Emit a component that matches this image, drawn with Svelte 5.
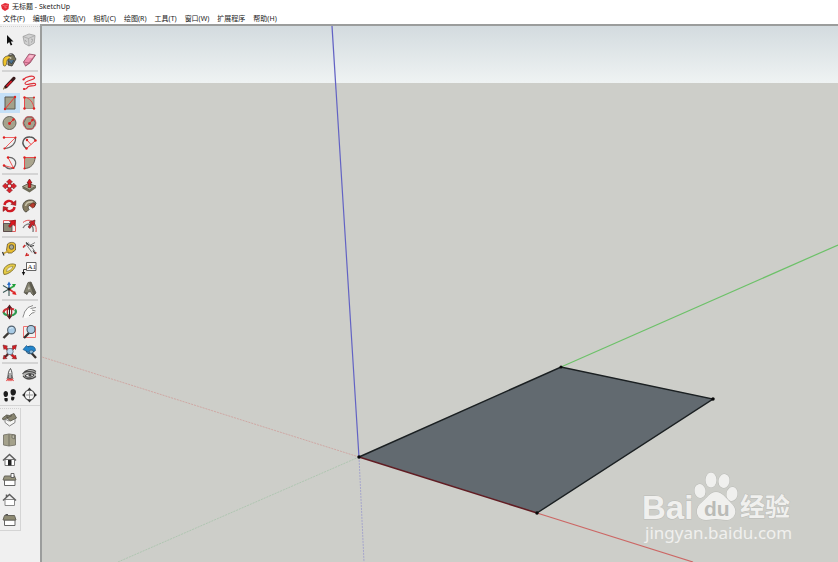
<script lang="ts">
	type Tool = { id: string; label: string; art: string };

	const menus = ['文件(F)', '编辑(E)', '视图(V)', '相机(C)', '绘图(R)', '工具(T)', '窗口(W)', '扩展程序', '帮助(H)'];

	// all tool art is drawn on a 20 x 20 grid
	const groups: Tool[][] = [
		[
			{ id: 'select', label: '选择', art: '<path d="M7 5v9l2.200-2 1.500 3.500 1.600-.8-1.500-3.200h2.700z" fill="#111"/>' },
			{ id: 'component', label: '制作组件', art: '<path d="M3 6.500 9 4l6 1.500-.8 7.500-5.200 3-4.500-2.500z" fill="#d0d0d0" stroke="#a5a5a5" stroke-width=".9"/><path d="m3 6.500 5.500 2 6.500-3M8.500 8.500 9 16" stroke="#a0a0a0" stroke-width=".7"/><path d="m5 10 1.500 2M11 9.500c2-1.500 2.500 1.500 0 3" stroke="#9a9a9a" stroke-width=".8"/>' },
			{ id: 'paint', label: '材质', art: '<path d="m8 6 5-1.500 3 4.500-4 7-4-1z" fill="#747158" stroke="#333" stroke-width=".8"/><path d="M3.500 15.500C2 9 4 5.500 9.500 6l1.500 2c-3 .5-4.500 2-4.500 6-.5 2-2 2.500-3 1.500z" fill="#f0c42c" stroke="#554a22" stroke-width=".7"/><path d="m8 10.500 3.500 3.500 2.500-4" fill="#4d7495" stroke="#26333e" stroke-width=".7"/><path d="M8 5.500c2-3 6-2 6.500 1" stroke="#444" stroke-width=".9"/><circle cx="10.500" cy="8" r="1" fill="#c9c6ae"/>' },
			{ id: 'eraser', label: '擦除', art: '<path d="m3.500 12 5.500-8 6.500 1-5.500 8-4.500 3z" fill="#ee8fae" stroke="#8c4a60" stroke-width=".8"/><path d="m3.500 12 5.500 1 6-8M9 13l-3.500 3" stroke="#a84e67" stroke-width=".7"/><path d="m10 5 4 .5-2 2.500-4-.5z" fill="#f8bccd"/>' }
		],
		[
			{ id: 'line', label: '直线', art: '<path d="M3 16.500 4.500 13l8.500-9c1.500-1 3 .5 2.500 2L7 15z" fill="#38191a"/><path d="m6 12.800 5-5.300 1.300 1.200-5.300 5.300z" fill="#d51b27"/><path d="m3 16.500 1-2.500 1.500 1.500z" fill="#b49e6c"/>' },
			{ id: 'freehand', label: '手绘线', art: '<path d="M3.500 6.500C6 3.500 13.500 2 14.500 4.500S4.500 7.500 5 10.500s9.500-2 10.500.5-5 1.500-7 2.500-1 3-4.500 2.500" stroke="#dd3038" stroke-width="1.200"/><circle cx="3.500" cy="6.500" r="1.100" fill="#d91e28"/><circle cx="4" cy="16" r="1.100" fill="#d91e28"/>' },
			{ id: 'rectangle', label: '矩形', art: '<path d="M5 4h10v12H5z" fill="#a3a18c" stroke="#5c5b52"/><path d="M5 16 15 4" stroke="#e63b3b"/><circle cx="5" cy="16" r="1.200" fill="#e12121"/><circle cx="15" cy="4" r="1.200" fill="#e12121"/>' },
			{ id: 'rotated', label: '旋转矩形', art: '<path d="M4.500 4.500h9.500v11H4.500z" fill="#b3b09b" stroke="#8c867b" stroke-width=".8"/><path d="M4.500 15.500v-11c5 0 9 5 9.500 11" stroke="#e84a4a"/><g fill="#e12121"><circle cx="4.500" cy="4.500" r="1.200"/><circle cx="4.500" cy="15.500" r="1.200"/><circle cx="14" cy="4.500" r="1"/><circle cx="14" cy="15.500" r="1.200"/></g>' },
			{ id: 'circle', label: '圆', art: '<circle cx="9.500" cy="10" r="6.500" fill="#a5a28c" stroke="#66645a"/><path d="m9.500 10.500 4-4" stroke="#df2929"/><circle cx="9.500" cy="10.500" r="1.400" fill="#df2020"/><circle cx="13.500" cy="6.500" r="1.200" fill="#df2020"/>' },
			{ id: 'polygon', label: '多边形', art: '<path d="m6.500 4 6 0 3 6-3 6h-6l-3-6z" fill="#a5a28c" stroke="#555"/><circle cx="9.500" cy="10" r="6.400" stroke="#cf4a4a" stroke-width=".9"/><path d="m9.500 10.500 3-3.500" stroke="#df2929"/><g fill="#df2020"><circle cx="9.500" cy="10.500" r="1.500"/><circle cx="12.500" cy="7" r="1.300"/></g>' },
			{ id: 'arc', label: '圆弧', art: '<path d="M15.500 4.500c.5 6-4 10.500-11 11" stroke="#666" stroke-width="1.200"/><path d="M4 4.500h11.500l-11 11" stroke="#ee5151" stroke-width=".9"/><g fill="#df2020"><circle cx="4" cy="4.500" r="1.200"/><circle cx="15.500" cy="4.500" r="1"/><circle cx="4.500" cy="15.500" r="1.100"/></g>' },
			{ id: 'arc2', label: '两点圆弧', art: '<path d="M6.500 15.500C-.5 10 4 3.500 10 4c3 0 4.500 1.500 5.500 3.500" stroke="#555" stroke-width="1.400"/><path d="m6.500 15.500 9-8M7 7l4 4.500" stroke="#ee4444"/><g fill="#df2020"><circle cx="6.500" cy="15.500" r="1.200"/><circle cx="15.500" cy="7.500" r="1.200"/><circle cx="7" cy="7" r="1.200"/></g>' },
			{ id: 'arc3', label: '三点圆弧', art: '<path d="M8 4.500c5-1 8.500 3 7.500 7-1.500 5-7 6-11.500 1" stroke="#666" stroke-width="1.200"/><path d="m4 12.500 9.500 2.500L8 4.500" stroke="#ed4545" stroke-width=".9"/><g fill="#df2020"><circle cx="4" cy="12.500" r="1.200"/><circle cx="8" cy="4.500" r="1.200"/><circle cx="13.500" cy="15" r="1.100"/></g>' },
			{ id: 'pie', label: '扇形', art: '<path d="M4.500 4.500H15c0 6-4 11-10.500 11z" fill="#aaa58e" stroke="#656056"/><path d="M4.500 15.500v-11H15" stroke="#e54a4a"/><g fill="#df2020"><circle cx="4.500" cy="4.500" r="1.200"/><circle cx="15" cy="4.500" r="1.100"/><circle cx="4.500" cy="15.500" r="1.100"/></g>' }
		],
		[
			{ id: 'move', label: '移动', art: '<path d="m9.500 3 3 3-1.500.5v2H8v-2L6.500 6zm0 14-3-3 1.500-.5v-2h3v2l1.500.5zM2.500 10l3-3 .5 1.500h2v3H6L5.500 13zm14 0-3 3-.5-1.500h-2v-3h2l.5-1.500z" fill="#d9222b" stroke="#7a1b1e" stroke-width=".5"/><circle cx="9.500" cy="10" r="1.300" fill="#f0f0f0"/>' },
			{ id: 'pushpull', label: '推/拉', art: '<path d="m2.500 10.500 6-3 7.500 2.500-6.500 4z" fill="#aaa68d" stroke="#4d4a3b" stroke-width=".8"/><path d="M2.500 10.500v2l7 4L16 12v-2l-6.500 4z" fill="#6e6b58"/><path d="m9.500 3 2.500 4h-1.200v4.500H8.200V7H7z" fill="#d91b20" stroke="#5b1010" stroke-width=".6"/>' },
			{ id: 'rotate', label: '旋转', art: '<path d="M4.500 9C5 4.500 11 3.500 13 7m1.500 4c-.5 4.500-6.500 5.500-8.500 2" stroke="#cf1b24" stroke-width="2.400"/><path d="m16 4.500-.2 5-5-1.200zM3 15.500l.2-5 5 1.200z" fill="#cf1b24" stroke="#741515" stroke-width=".5"/>' },
			{ id: 'follow', label: '路径跟随', art: '<path d="M5.500 16C1 12 2 5 9 4c4-.5 6.500 1 7 3.500l-1.500 3-4-1c-2.500 0-3 1.500-1.500 4L7 15.500z" fill="#857b60" stroke="#4a463a" stroke-width=".9"/><path d="M5.500 10C6 7 9 5.500 13 6" stroke="#c9c3aa" stroke-width="1.500"/><path d="m9.500 9.500 3-2.500 2.500.5-.5 3.500-2 1z" fill="#b93a2b" stroke="#5b241c" stroke-width=".6"/>' },
			{ id: 'scale', label: '缩放', art: '<path d="M3.500 4.500h12v11h-12z" fill="#f8eeee" stroke="#e25c5c"/><path d="M3.500 7.500h8.500v8H3.500z" fill="#8c8975" stroke="#444" stroke-width=".8"/><path d="m8.500 10 2.500-3-1.500-1.500 6-1.500-.8 6-1.700-1.500-3 3z" fill="#dc171f" stroke="#661010" stroke-width=".5"/>' },
			{ id: 'offset', label: '偏移', art: '<path d="M3 6.500C7 3 12 4 14 7c2 2.500 2.500 5.500 2 9" stroke="#e44a4a"/><path d="M3 12c2-4 6-5 8-3 2 1.500 2.500 4 2 7" stroke="#777" stroke-width="1.300"/><path d="m8 11 2.500-3.500L9 6l6-2-.8 6-1.700-1.200-2.500 3.700z" fill="#c8232a" stroke="#4c1717" stroke-width=".5"/>' }
		],
		[
			{ id: 'tape', label: '卷尺工具', art: '<path d="M7.500 5c3-2.500 8-2 8 1v5l-4 3H8l-1.500-3z" fill="#e9bd32" stroke="#66562a" stroke-width=".8"/><circle cx="11.500" cy="8" r="2.300" fill="#aaa993" stroke="#5c5b49"/><path d="m8.500 12-5 2.500" stroke="#caa63b" stroke-width="1.800"/><path d="m2.500 13 1.500 3.500" stroke="#333" stroke-width="1.200"/>' },
			{ id: 'dimension', label: '尺寸', art: '<path d="M4 8.500 8.500 3.500M9 7l6-3.500M7 6.500l5 7M9 4.500l6 8" stroke="#777" stroke-width=".9"/><path d="m5 6-2 2.500M7 14l-1 2.500 3-.5M14 13.500l2.500.5" stroke="#cf2828" stroke-width="1.300"/><path d="m10 7.500 4-1m-8-3 3 3m4 5 2.500 3.500" stroke="#3a3a3a" stroke-width="1.200"/>' },
			{ id: 'protractor', label: '量角器', art: '<path d="M4 15.500C1 9 9 3 15.500 5.500c.5 4-6.500 10-11.500 10z" fill="#e5cb45" stroke="#80712c" stroke-width=".9"/><path d="M6.500 12.500C6.500 9.500 9.500 7.500 13 7.500c-.5 2.500-3.500 4.500-6.500 5z" fill="#f2efd8" stroke="#948442" stroke-width=".7"/>' },
			{ id: 'text', label: '文字', art: '<path d="M6.500 3.500H16v8H6.500z" fill="#fff" stroke="#555" stroke-width=".9"/><path d="M6.500 10.500h-3v5" stroke="#333"/><path d="m1.800 13 1.700 3.500L5.200 13z" fill="#111"/><text x="7.500" y="10" font-family="Liberation Serif, serif" font-size="7" fill="#222">A1</text>' },
			{ id: 'axes', label: '轴', art: '<path d="m9 10-6-3.500M9 10v7M3 13.500 9 10" stroke="#3c5b58" stroke-width="1.100"/><path d="m9 10 5-3" stroke="#2eaa43" stroke-width="1.600"/><path d="m12 5 4 0-2 3.500z" fill="#1e9e38"/><path d="M9 10V4" stroke="#3174cd" stroke-width="1.600"/><path d="m7 6 2-3.500L11 6z" fill="#286cc7"/><path d="m9 10 5 3.500" stroke="#dd3131" stroke-width="1.600"/><path d="m12 15 4.500 1-1.500-4z" fill="#df2424"/><circle cx="9" cy="10" r="1.500" fill="#222"/>' },
			{ id: 'text3d', label: '三维文字', art: '<path d="m4 13.500 4-10 3-.5 5 11-2.500 2.500-2-2-1-2-2.500.5-1 2.500z" fill="#858371" stroke="#55534a" stroke-width=".8"/><path d="M11 3 9 4l2 5 2.500 7.500L16 14zM4 13.500l3 2 1-2.500z" fill="#5e5c50"/><path d="m9 7 .8 3-1.800.5z" fill="#d6d5cc"/>' }
		],
		[
			{ id: 'orbit', label: '环绕观察', art: '<path d="M15 7.500c2.500 3-.5 6-5 6-3.500 0-6-1.500-6.500-3.500" stroke="#2f9a50" stroke-width="2.200"/><path d="M3.500 10.500c0-3.500 5-5 10.500-3" stroke="#cc3035" stroke-width="2"/><ellipse cx="9.500" cy="10" rx="2.200" ry="4.500" stroke="#a82c31" stroke-width="1.300"/><path d="m9.500 2.500 2.500 3.500H7zm0 15L12 14H7z" fill="#5d1f24"/><path d="M9.500 5v10" stroke="#222"/>' },
			{ id: 'pan', label: '平移', art: '<path d="M3 16c0-2 1.500-3.500 1.500-6L8 5.500l5-2 .5 1-3 2 5.500-1v1.500L13 8.500l2.500.5-.5 1.500-3 .5-3 3.500L6 16z" fill="#fbfbfa"/><path d="M3 15.500c0-2 1.500-3.500 1.500-5.500L8 5.500l5-2m-2.500 3L16 5.500M12 8l3.500 1M9 14l3-3 2.500-.5" stroke="#7d7d7d" stroke-width=".9"/>' },
			{ id: 'zoom', label: '缩放视图', art: '<path d="m8.500 11-5 5" stroke="#3d3935" stroke-width="2.400"/><circle cx="11.500" cy="8" r="3.900" fill="#a9cbe5" stroke="#55626e" stroke-width="1.100"/><path d="M9.500 7c1-1.500 2.500-1.500 3.500-1" stroke="#e4f4ff"/>' },
			{ id: 'zoomwin', label: '缩放窗口', art: '<path d="M3.500 4.500h12v11h-12z" stroke="#f06161" stroke-width=".9"/><path d="m9 11-5 5" stroke="#33302d" stroke-width="2.300"/><circle cx="11" cy="7.500" r="4" fill="#abcbe3" stroke="#4a535b" stroke-width="1.100"/>' },
			{ id: 'extents', label: '充满视窗', art: '<path d="m3 3 4.500 1-1 1L9 8 7.500 9 5 6.500l-1 1zM16.500 3l-1 4.500-1-1-3 3L10 8l3-3-1-1zM3 17l1-4 1 1 2.500-3L9 12.500l-3 3 1 1zm13.500 0-4.500-.5 1-1-3-3 1.500-1.500 3 3 1-1z" fill="#d61b22" stroke="#5f1e20" stroke-width=".5"/><circle cx="10" cy="9.500" r="3.200" fill="#c1dcf0" stroke="#6a737c" stroke-width=".9"/><path d="m8 12-3 3" stroke="#333" stroke-width="1.300"/>' },
			{ id: 'previous', label: '上一个', art: '<path d="m11.500 11 4.500 5" stroke="#38322e" stroke-width="2.300"/><circle cx="10" cy="8" r="3.800" fill="#8fb8d6" stroke="#2e5778" stroke-width="1.100"/><path d="M3 7.500 6.500 3.500 8 5c4-2 7.500-.5 7.500 3.500l-1.500 1c-1-1.500-3-2-5-.5l1 2z" fill="#2485cb" stroke="#174d78" stroke-width=".6"/>' }
		],
		[
			{ id: 'position', label: '定位相机', art: '<path d="M8.500 13.500c-1-4.500 0-7.500 2-10 1.500 2.500 2 5.500 1 10z" fill="#eee" stroke="#444" stroke-width=".9"/><path d="m8.500 10-1.500 4m4.500-4 1.500 4M10 8v5" stroke="#555" stroke-width=".9"/><path d="m6.500 16 1.500-2 1 1.500 1-1.500 1 1.500 1-1.500 1.500 2" stroke="#e34444" stroke-width="1.200"/>' },
			{ id: 'look', label: '绕轴旋转', art: '<path d="M2.500 10c3-5.500 10-6.500 13.500-3v5c-3 3.500-9 4-12 1z" fill="#b0b0ae"/><path d="M2.500 9c3-4.500 9-6 13.500-2.500M3 11c3 4 9 3.500 13 .5M4 7.500c4-1.500 8-1.500 12 1" stroke="#444" stroke-width="1.100"/><path d="M5 11c2-2.500 6-3 9-1-2 2.500-6 3-9 1z" fill="#f3f3f3" stroke="#333"/><circle cx="10" cy="10" r="1.600" fill="#444"/>' },
			{ id: 'walk', label: '漫游', art: '<path d="M3.500 8.500c0-3.500 4.500-3.500 4.500 0 0 2-.5 3.500-2.500 3.500-1.500 0-2-2-2-3.500zM10.500 6.500c.5-3.500 5.500-3 5.500.5 0 2-1.500 4-3.500 3.500-1.500-.5-2-2-2-4zM4.500 13h3c1 3-.5 4-1.500 3.500-1.500 0-2-2-1.500-3.500zm7-1.500 3 .5c0 3-1.500 4-2.500 3.500-1.200-.5-1.200-2-.5-4z" fill="#1d1d1d"/>' },
			{ id: 'section', label: '剖切面', art: '<circle cx="9.500" cy="10" r="5" fill="#f7f7f7" stroke="#555" stroke-width="1.100"/><path d="M6 10h7M9.500 6.500v7" stroke="#999"/><path d="m9.500 2.500 2.500 3H7zm0 15L7 14.500h5zM2 10l3-2.500v5zm15 0-3-2.500v5z" fill="#333"/>' }
		]
	];

	const views: Tool[] = [
		{ id: 'iso', label: '等轴', art: '<path d="m5 9 4 2 6-3v4.500L9.500 16 5 12.500z" fill="#f6f6f4" stroke="#777" stroke-width=".9"/><path d="m2.500 8 4-3 3 .5 4.500-2 2.500 4.500-6 3L7 8l-4 2z" fill="#888570" stroke="#55544a" stroke-width=".8"/><path d="M7 5v3m0 0 5-2.500" stroke="#4f4d43" stroke-width=".8"/>' },
		{ id: 'top', label: '俯视图', art: '<path d="M3.500 5 9 4l6.500 1v10L9 16l-5.500-1z" fill="#a4a18b" stroke="#77756a" stroke-width=".9"/><path d="M9 4.500V16" stroke="#6e6b5d" stroke-width=".9"/><path d="M12 5h2.500v4L12 8z" fill="#bdbbaa" stroke="#66655a" stroke-width=".7"/>' },
		{ id: 'front', label: '前视图', art: '<path d="M5 9.500h9.500v6H5z" fill="#fff" stroke="#777"/><path d="M8 10h3.500v5.500H8z" fill="#222"/><path d="m3 10.500 6.500-6 6.500 6" stroke="#5e5e5e" stroke-width="1.600"/>' },
		{ id: 'right', label: '右视图', art: '<path d="M4.500 10H15v5.500H4.500z" fill="#fff" stroke="#666"/><path d="m3 10 1.500-4h10l1.500 4z" fill="#96937c" stroke="#66645a"/><path d="M11 3.500h3v4h-3z" fill="#fff" stroke="#555" stroke-width=".9"/>' },
		{ id: 'back', label: '后视图', art: '<path d="M5 9.500h9.500v6H5z" fill="#fff" stroke="#8a8a8a"/><path d="m3 10.500 6.500-6 6.500 6M6.500 7V4.500" stroke="#5e5e5e" stroke-width="1.500"/>' },
		{ id: 'left', label: '左视图', art: '<path d="M4.500 10H15v5.500H4.500z" fill="#fff" stroke="#666"/><path d="m3 10 1.500-4.500h10L16 10z" fill="#8e8b73" stroke="#66645a"/><path d="M5.500 4.500H8" stroke="#555"/>' }
	];

	let active = $state('rectangle');
</script>

{#snippet toolButton(tool: Tool)}
	<button
		class="tool"
		class:active={active === tool.id}
		aria-label={tool.label}
		aria-pressed={active === tool.id}
		onclick={() => (active = tool.id)}
	>
		<svg viewBox="0 0 20 20" fill="none" aria-hidden="true">{@html tool.art}</svg>
	</button>
{/snippet}

<div class="window">
	<header class="title-bar">
		<svg class="logo" viewBox="0 0 8 8" aria-hidden="true">
			<path d="M0 2 4 0l4 1-.5 5L4 8 1 6z" fill="#e52c38" />
			<path d="m1 2 3 1 3-1M4 3v2l2-1" fill="none" stroke="#f58a8f" stroke-width=".6" />
		</svg>
		<span>无标题 - SketchUp</span>
	</header>

	<nav class="menu-bar">
		{#each menus as menu}
			<button class="menu">{menu}</button>
		{/each}
	</nav>

	<main class="workspace">
		<aside class="dock">
			<div class="toolbar">
				{#each groups as group}
					<div class="group">
						{#each group as tool (tool.id)}
							{@render toolButton(tool)}
						{/each}
					</div>
				{/each}
			</div>
			<div class="toolbar views">
				{#each views as tool (tool.id)}
					{@render toolButton(tool)}
				{/each}
			</div>
		</aside>

		<section class="viewport">
			<svg class="scene" viewBox="42 26 796 536" preserveAspectRatio="xMinYMin slice">
				<defs>
					<linearGradient id="sky" x1="0" y1="0" x2="0" y2="1">
						<stop offset="0" stop-color="#d3dbdf" />
						<stop offset="1" stop-color="#eff3f3" />
					</linearGradient>
				</defs>
				<rect x="42" y="26" width="796" height="57" fill="url(#sky)" />
				<rect x="42" y="83" width="796" height="479" fill="#cdcec9" />

				<!-- negative axes -->
				<g stroke-width="1" stroke-dasharray="2 1">
					<path d="M359 457 42 357" stroke="#cfa8a4" />
					<path d="M359 457 118 562" stroke="#afc6b1" />
					<path d="m359 457 5 105" stroke="#a6a6cc" />
				</g>

				<!-- positive axes -->
				<path d="m359 457-27-431" stroke="#6262c4" stroke-width="1.200" />
				<path d="m561 367 277-122" stroke="#6cc168" stroke-width="1.200" />
				<path d="m537 513 156 49" stroke="#cc6664" stroke-width="1.200" />

				<path d="m359 457 202-90 152 32-176 114z" fill="#626a70" />
				<path d="m359 457 202-90 152 32-176 114" fill="none" stroke="#1b2022" stroke-width="1.400" />
				<path d="m359 457 178 56" stroke="#611d23" stroke-width="1.500" />
				<g fill="#080808">
					<circle cx="359" cy="457" r="1.700" />
					<circle cx="561" cy="367" r="1.500" />
					<circle cx="713" cy="399" r="1.700" />
					<circle cx="537" cy="513" r="1.700" />
				</g>

				<g class="watermark">
					<text class="brand" x="642" y="519">Bai</text>
					<g>
						<ellipse cx="700" cy="491" rx="5.500" ry="7" transform="rotate(-12 700 491)" />
						<ellipse cx="711" cy="480" rx="5.500" ry="7.500" />
						<ellipse cx="724" cy="481" rx="5.500" ry="7" transform="rotate(12 724 481)" />
						<ellipse cx="732" cy="494" rx="5.500" ry="7" transform="rotate(10 732 494)" />
						<path d="M716 492c6 0 9 5 15 11 8 7 4 17-5 17-4 0-6-1-10-1s-6 1-10 1c-10 0-12-11-5-17 7-6 9-11 15-11z" />
					</g>
					<text class="du" x="704" y="516">du</text>
					<text class="zh" x="740" y="516">经验</text>
					<text class="site" x="645" y="539">jingyan.baidu.com</text>
				</g>
			</svg>
		</section>
	</main>
</div>

<style>
	:global(body) {
		margin: 0;
		overflow: hidden;
	}

	.window {
		display: flex;
		flex-direction: column;
		height: 100vh;
		background: #fff;
		color: #222;
		font-family: "Noto Sans", "Noto Sans CJK SC", sans-serif;
		font-size: 7px;
		line-height: 12px;
	}

	.title-bar {
		display: flex;
		align-items: center;
		gap: 3px;
		height: 13px;
		padding-left: 1px;
	}

	.logo {
		width: 8px;
		height: 8px;
	}

	.menu-bar {
		display: flex;
		gap: 8px;
		height: 11px;
		padding-left: 3px;
	}

	button {
		padding: 0;
		border: 0;
		background: none;
		color: inherit;
		font: inherit;
	}

	.menu {
		line-height: 11px;
		white-space: nowrap;
	}

	.workspace {
		display: flex;
		flex: 1;
		min-height: 0;
	}

	.dock {
		flex: none;
		width: 40px;
		background: #f0f0f0;
	}

	.toolbar {
		box-sizing: border-box;
		padding-top: 3px;
		border-top: 1px dotted #d2d2d2;
		margin-top: 2px;
		border-bottom: 1px solid #d4d4d4;
	}

	.group {
		display: grid;
		grid-template-columns: 20px 20px;
	}

	.group + .group::before {
		content: "";
		grid-column: 1 / -1;
		height: 2px;
		margin: 0 2px 1px;
		background: #d4d4d4;
	}

	.toolbar.views {
		width: 21px;
		padding-top: 1px;
		border-right: 1px solid #d4d4d4;
	}

	.tool {
		display: block;
		width: 20px;
		height: 20px;
	}

	.tool.active {
		background: #c5e0f7;
	}

	.tool svg {
		display: block;
		width: 20px;
		height: 20px;
	}

	.viewport {
		flex: 1;
		min-width: 0;
		border-top: 2px solid #9b9d9c;
		border-left: 2px solid #9b9d9c;
		background: #cdcec9;
	}

	.scene {
		display: block;
		width: 100%;
		height: 100%;
	}

	.watermark {
		fill: #f0f0ee;
		stroke: #babbb7;
		stroke-width: 1px;
		paint-order: stroke;
	}

	.brand {
		font: bold 33px "Liberation Sans", sans-serif;
	}

	.du {
		font: bold 21px "Liberation Sans", sans-serif;
		fill: #babbb7;
		stroke: none;
	}

	.zh {
		font: bold 25px "Noto Sans CJK SC", sans-serif;
	}

	.site {
		font: 17px "Noto Sans", sans-serif;
		stroke: none;
	}
</style>
